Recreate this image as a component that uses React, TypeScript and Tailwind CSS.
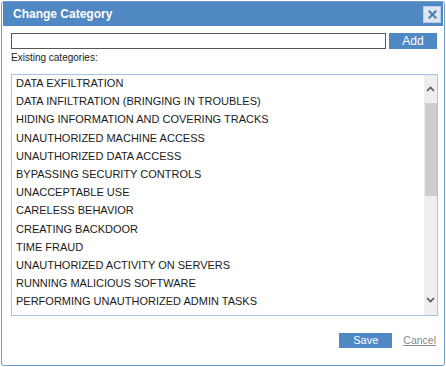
import React from "react";

const categories = [
  "DATA EXFILTRATION",
  "DATA INFILTRATION (BRINGING IN TROUBLES)",
  "HIDING INFORMATION AND COVERING TRACKS",
  "UNAUTHORIZED MACHINE ACCESS",
  "UNAUTHORIZED DATA ACCESS",
  "BYPASSING SECURITY CONTROLS",
  "UNACCEPTABLE USE",
  "CARELESS BEHAVIOR",
  "CREATING BACKDOOR",
  "TIME FRAUD",
  "UNAUTHORIZED ACTIVITY ON SERVERS",
  "RUNNING MALICIOUS SOFTWARE",
  "PERFORMING UNAUTHORIZED ADMIN TASKS",
  "SOFTWARE INFRINGEMENT",
];

function CloseIcon() {
  return (
    <svg width="9" height="9" viewBox="0 0 9 9">
      <path d="M1.5 1.5 L7.5 7.5 M7.5 1.5 L1.5 7.5" stroke="#4e7fb3" strokeWidth="2.2" strokeLinecap="square" />
    </svg>
  );
}

export default function App() {
  return (
    <div className="w-[446px] h-[367px] bg-white font-['Liberation_Sans',Arial,sans-serif] pt-[1px] pl-[1px]">
      <div className="w-[444px] h-[365px] border border-[#6f9fd2] rounded-[3px] px-[1px] flex flex-col">
        <div className="h-[24px] bg-[#4f88c2] flex items-center justify-between pl-[10px] pr-[2px]">
          <span className="text-white font-bold text-[12px]">Change Category</span>
          <button className="w-[18px] h-[17px] bg-[#dce7f2] border border-[#b9cde3] flex items-center justify-center">
            <CloseIcon />
          </button>
        </div>

        <div className="flex items-center pl-[8px] pr-[6px] mt-[7px] gap-[3px]">
          <input className="w-[375px] h-[16px] border border-[#555] outline-none" />
          <button className="w-[48px] h-[16px] bg-[#4f88c2] text-white text-[12px] leading-none flex items-center justify-center">
            Add
          </button>
        </div>

        <div className="pl-[8px] mt-[1px] text-[10px] text-[#222] leading-[16px]">Existing categories:</div>

        <div className="ml-[8px] mt-[8px] w-[427px] h-[242px] border border-[#a5c3e3] flex overflow-hidden">
          <div className="flex-1 overflow-hidden pl-[4px]">
            {categories.map((c) => (
              <div key={c} className="h-[18.2px] leading-[17px] text-[11px] text-[#1a1a1a] whitespace-nowrap">
                {c}
              </div>
            ))}
          </div>
          <div className="w-[13px] bg-[#eeeeee] flex flex-col items-center">
            <div className="h-[28px] flex items-center justify-center">
              <svg width="9" height="6" viewBox="0 0 9 6">
                <path d="M1 5 L4.5 1.5 L8 5" stroke="#555" strokeWidth="1.6" fill="none" />
              </svg>
            </div>
            <div className="w-[12px] h-[93px] bg-[#cdcdcd]" />
            <div className="flex-1" />
            <div className="h-[26px] flex items-start justify-center pt-[8px]">
              <svg width="9" height="6" viewBox="0 0 9 6">
                <path d="M1 1 L4.5 4.5 L8 1" stroke="#555" strokeWidth="1.6" fill="none" />
              </svg>
            </div>
          </div>
        </div>

        <div className="flex items-center justify-end mt-[17px] pr-[7px] gap-[11px]">
          <button className="w-[53px] h-[15px] bg-[#4f88c2] text-white text-[11px] leading-none flex items-center justify-center">
            Save
          </button>
          <a className="text-[10.5px] text-[#888] underline">Cancel</a>
        </div>
      </div>
    </div>
  );
}
